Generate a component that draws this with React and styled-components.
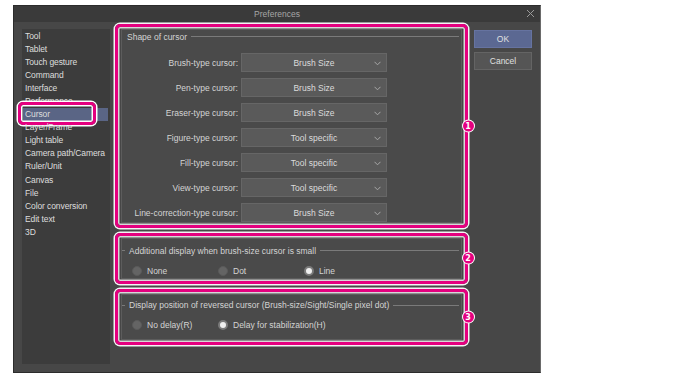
import React from 'react';
import styled, { createGlobalStyle } from 'styled-components';

const GlobalStyle = createGlobalStyle`
  body {
    margin: 0;
    background: #fff;
    font-family: "Liberation Sans", Arial, sans-serif;
  }
`;

const Page = styled.div`
  padding: 5px 0 0 13px;
`;

const Dialog = styled.div`
  width: 528px;
  height: 368px;
  box-sizing: border-box;
  background: #474747;
  border: 1px solid #2c2c2c;
  border-right-color: #6a6a6a;
  display: flex;
  flex-direction: column;
`;

const TitleBar = styled.div`
  height: 16px;
  background: #3a3a3a;
  position: relative;
  display: flex;
  align-items: center;
  justify-content: center;
  color: #a6a6a6;
  font-size: 8.5px;
`;

const Close = styled.span`
  position: absolute;
  right: 5px;
  top: 3px;
  width: 9px;
  height: 9px;
`;

const Body = styled.div`
  display: flex;
  padding: 2px 0 0 8px;
`;

const Nav = styled.ul`
  list-style: none;
  margin: 5px 5px 0 0;
  padding: 0.5px 0 0;
  width: 88px;
  height: 334px;
  background: #3c3c3c;
`;

const NavItem = styled.li`
  position: relative;
  height: 13.1px;
  line-height: 13.1px;
  margin: 0 2px 0 1px;
  padding-left: 2px;
  font-size: 8.5px;
  letter-spacing: -0.1px;
  color: #dedede;
  white-space: nowrap;
  background: ${p => (p.active ? '#5a6585' : 'transparent')};
`;

const NavMark = styled.span`
  position: absolute;
  left: -5px;
  top: -6px;
  width: 78px;
  height: 23px;
  box-sizing: border-box;
  border: 3px solid #e4007f;
  border-radius: 5px;
  box-shadow: 0 0 0 1.5px #fff, inset 0 0 0 1.5px #fff;
`;

const Content = styled.div`
  width: 353px;
  display: flex;
  flex-direction: column;
  gap: 5px;
`;

const Callout = styled.div`
  position: relative;
  box-sizing: border-box;
  border: 3px solid #e4007f;
  border-radius: 5px;
  box-shadow: 0 0 0 1.5px #f4f4f4, inset 0 0 0 1.5px #d8d8d8;
  padding: 2px 3px;
`;

const Badge = styled.span`
  position: absolute;
  right: -8.5px;
  top: 50%;
  transform: translateY(-50%);
  width: 11px;
  height: 11px;
  border-radius: 50%;
  background: #e4007f;
  box-shadow: 0 0 0 1px #fff;
  color: #fff;
  font-family: "DejaVu Sans", sans-serif;
  font-weight: bold;
  font-size: 8px;
  line-height: 11px;
  text-align: center;
`;

const Frame = styled.div`
  border: 1px solid #5c5c5c;
  background: #4a4a4a;
  padding: ${p => p.pad};
`;

const Legend = styled.div`
  display: flex;
  align-items: center;
  gap: 4px;
  height: 11px;
  margin-top: ${p => p.top || 0}px;
  padding-left: ${p => p.indent}px;
  font-size: 8.5px;
  color: #d4d4d4;
  white-space: nowrap;
  &::before {
    content: '';
    width: ${p => (p.indent ? 0 : 3)}px;
    height: 1px;
    background: #7a7a7a;
  }
  &::after {
    content: '';
    flex: 1;
    height: 1px;
    margin-right: 2px;
    background: #7a7a7a;
  }
`;

const Rows = styled.div`
  display: flex;
  flex-direction: column;
  gap: 6px;
  margin-top: 11px;
`;

const Row = styled.div`
  display: flex;
  align-items: center;
  height: 19px;
`;

const Label = styled.span`
  width: 116px;
  padding-right: 3px;
  text-align: right;
  font-size: 8.5px;
  color: #d4d4d4;
  white-space: nowrap;
`;

const Select = styled.div`
  position: relative;
  width: 146px;
  height: 19px;
  box-sizing: border-box;
  background: #5a5a5a;
  border: 1px solid #666;
  display: flex;
  align-items: center;
  justify-content: center;
  font-size: 8.5px;
  color: #dcdcdc;
`;

const Chevron = styled.svg`
  position: absolute;
  right: 5px;
  top: 7px;
`;

const RadioRow = styled.div`
  display: flex;
  height: 12px;
  margin-top: 8.5px;
  padding-left: 10px;
`;

const RadioOption = styled.label`
  width: 86px;
  flex-shrink: 0;
  display: flex;
  align-items: center;
  gap: 5px;
  font-size: 8.5px;
  color: #d4d4d4;
  white-space: nowrap;
`;

const RadioDot = styled.span`
  width: 10px;
  height: 10px;
  flex-shrink: 0;
  box-sizing: border-box;
  border-radius: 50%;
  background: ${p => (p.checked ? '#f0f0f0' : '#646464')};
  border: ${p => (p.checked ? '2.5px solid #7a7a7a' : '1px solid #5a5a5a')};
`;

const Side = styled.div`
  display: flex;
  flex-direction: column;
  gap: 4px;
  margin: 6px 0 0 6px;
`;

const Button = styled.div`
  width: 58px;
  height: 18px;
  box-sizing: border-box;
  display: flex;
  align-items: center;
  justify-content: center;
  font-size: 8.5px;
  color: #e0e0e0;
  background: ${p => (p.primary ? '#5b6892' : '#555')};
  border: 1px solid ${p => (p.primary ? '#6673a0' : '#646464')};
`;

const navItems = [
  'Tool', 'Tablet', 'Touch gesture', 'Command', 'Interface', 'Performance',
  'Cursor', 'Layer/Frame', 'Light table', 'Camera path/Camera', 'Ruler/Unit',
  'Canvas', 'File', 'Color conversion', 'Edit text', '3D',
];

const cursorRows = [
  ['Brush-type cursor:', 'Brush Size'],
  ['Pen-type cursor:', 'Brush Size'],
  ['Eraser-type cursor:', 'Brush Size'],
  ['Figure-type cursor:', 'Tool specific'],
  ['Fill-type cursor:', 'Tool specific'],
  ['View-type cursor:', 'Tool specific'],
  ['Line-correction-type cursor:', 'Brush Size'],
];

function Radio({ label, checked }) {
  return (
    <RadioOption>
      <RadioDot checked={checked} />
      {label}
    </RadioOption>
  );
}

export default function App() {
  return (
    <Page>
      <GlobalStyle />
      <Dialog>
        <TitleBar>
          Preferences
          <Close>
            <svg width="9" height="9" viewBox="0 0 9 9">
              <path d="M1 1 L8 8 M8 1 L1 8" stroke="#9a9a9a" strokeWidth="1" />
            </svg>
          </Close>
        </TitleBar>
        <Body>
          <Nav>
            {navItems.map(item => (
              <NavItem key={item} active={item === 'Cursor'}>
                {item}
                {item === 'Cursor' && <NavMark />}
              </NavItem>
            ))}
          </Nav>
          <Content>
            <Callout>
              <Frame pad="0">
                <Legend indent={1} top={1}>Shape of cursor</Legend>
                <Rows>
                  {cursorRows.map(([label, value]) => (
                    <Row key={label}>
                      <Label>{label}</Label>
                      <Select>
                        {value}
                        <Chevron width="7" height="5" viewBox="0 0 7 5">
                          <path d="M0.5 0.8 L3.5 3.8 L6.5 0.8" fill="none" stroke="#a8a8a8" strokeWidth="1" />
                        </Chevron>
                      </Select>
                    </Row>
                  ))}
                </Rows>
              </Frame>
              <Badge>1</Badge>
            </Callout>
            <Callout>
              <Frame pad="6px 0 1px">
                <Legend indent={0}>Additional display when brush-size cursor is small</Legend>
                <RadioRow>
                  <Radio label="None" />
                  <Radio label="Dot" />
                  <Radio label="Line" checked />
                </RadioRow>
              </Frame>
              <Badge>2</Badge>
            </Callout>
            <Callout>
              <Frame pad="5px 0 8px">
                <Legend indent={0}>Display position of reversed cursor (Brush-size/Sight/Single pixel dot)</Legend>
                <RadioRow>
                  <Radio label="No delay(R)" />
                  <Radio label="Delay for stabilization(H)" checked />
                </RadioRow>
              </Frame>
              <Badge>3</Badge>
            </Callout>
          </Content>
          <Side>
            <Button primary>OK</Button>
            <Button>Cancel</Button>
          </Side>
        </Body>
      </Dialog>
    </Page>
  );
}
